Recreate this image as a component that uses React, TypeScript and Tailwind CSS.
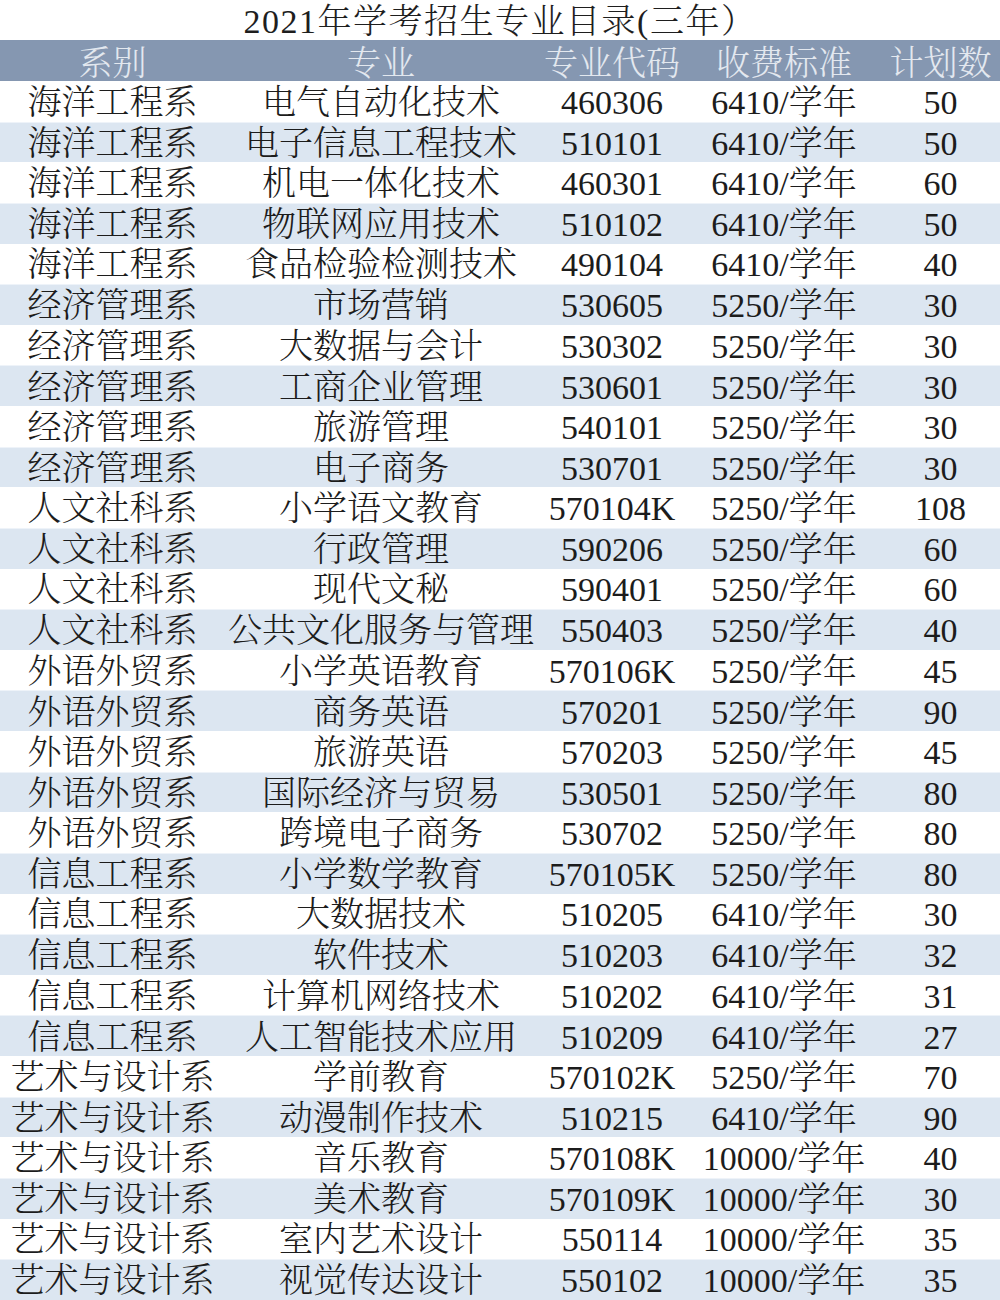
import React from "react";

const rows: [string, string, string, string, string][] = [
  ["海洋工程系", "电气自动化技术", "460306", "6410/学年", "50"],
  ["海洋工程系", "电子信息工程技术", "510101", "6410/学年", "50"],
  ["海洋工程系", "机电一体化技术", "460301", "6410/学年", "60"],
  ["海洋工程系", "物联网应用技术", "510102", "6410/学年", "50"],
  ["海洋工程系", "食品检验检测技术", "490104", "6410/学年", "40"],
  ["经济管理系", "市场营销", "530605", "5250/学年", "30"],
  ["经济管理系", "大数据与会计", "530302", "5250/学年", "30"],
  ["经济管理系", "工商企业管理", "530601", "5250/学年", "30"],
  ["经济管理系", "旅游管理", "540101", "5250/学年", "30"],
  ["经济管理系", "电子商务", "530701", "5250/学年", "30"],
  ["人文社科系", "小学语文教育", "570104K", "5250/学年", "108"],
  ["人文社科系", "行政管理", "590206", "5250/学年", "60"],
  ["人文社科系", "现代文秘", "590401", "5250/学年", "60"],
  ["人文社科系", "公共文化服务与管理", "550403", "5250/学年", "40"],
  ["外语外贸系", "小学英语教育", "570106K", "5250/学年", "45"],
  ["外语外贸系", "商务英语", "570201", "5250/学年", "90"],
  ["外语外贸系", "旅游英语", "570203", "5250/学年", "45"],
  ["外语外贸系", "国际经济与贸易", "530501", "5250/学年", "80"],
  ["外语外贸系", "跨境电子商务", "530702", "5250/学年", "80"],
  ["信息工程系", "小学数学教育", "570105K", "5250/学年", "80"],
  ["信息工程系", "大数据技术", "510205", "6410/学年", "30"],
  ["信息工程系", "软件技术", "510203", "6410/学年", "32"],
  ["信息工程系", "计算机网络技术", "510202", "6410/学年", "31"],
  ["信息工程系", "人工智能技术应用", "510209", "6410/学年", "27"],
  ["艺术与设计系", "学前教育", "570102K", "5250/学年", "70"],
  ["艺术与设计系", "动漫制作技术", "510215", "6410/学年", "90"],
  ["艺术与设计系", "音乐教育", "570108K", "10000/学年", "40"],
  ["艺术与设计系", "美术教育", "570109K", "10000/学年", "30"],
  ["艺术与设计系", "室内艺术设计", "550114", "10000/学年", "35"],
  ["艺术与设计系", "视觉传达设计", "550102", "10000/学年", "35"],
];

const font = {
  fontFamily:
    '"Liberation Serif", "Noto Serif CJK SC", "Noto Sans CJK SC", serif',
};

export default function App() {
  return (
    <div className="w-[1000px] h-[1300px] bg-white overflow-hidden" style={font}>
      <div className="h-[40px] flex items-center justify-center pt-[4px] text-[34px] tracking-[1.5px] leading-none text-[#1e1e1e] font-light">
        2021年学考招生专业目录(三年）
      </div>
      <div className="h-[41px] grid grid-cols-[225px_312px_150px_194px_119px] items-center pt-[6px] bg-[#8597b1] text-[#e3e8ef] text-[34px] leading-none font-light">
        <div className="text-center">系别</div>
        <div className="text-center">专业</div>
        <div className="text-center">专业代码</div>
        <div className="text-center">收费标准</div>
        <div className="text-center">计划数</div>
      </div>
      {rows.map((r, i) => (
        <div
          key={i}
          className={
            i % 2 === 1
              ? "h-[40.63px] grid grid-cols-[225px_312px_150px_194px_119px] items-center pt-[3px] bg-[#dce6f1] border-t border-[#eef3f9] text-[34px] leading-none text-[#1c1c1c] font-light"
              : "h-[40.63px] grid grid-cols-[225px_312px_150px_194px_119px] items-center pt-[3px] bg-white text-[34px] leading-none text-[#1c1c1c] font-light"
          }
        >
          <div className="text-center whitespace-nowrap">{r[0]}</div>
          <div className="text-center whitespace-nowrap">{r[1]}</div>
          <div className="text-center whitespace-nowrap">{r[2]}</div>
          <div className="text-center whitespace-nowrap">{r[3]}</div>
          <div className="text-center whitespace-nowrap">{r[4]}</div>
        </div>
      ))}
    </div>
  );
}
